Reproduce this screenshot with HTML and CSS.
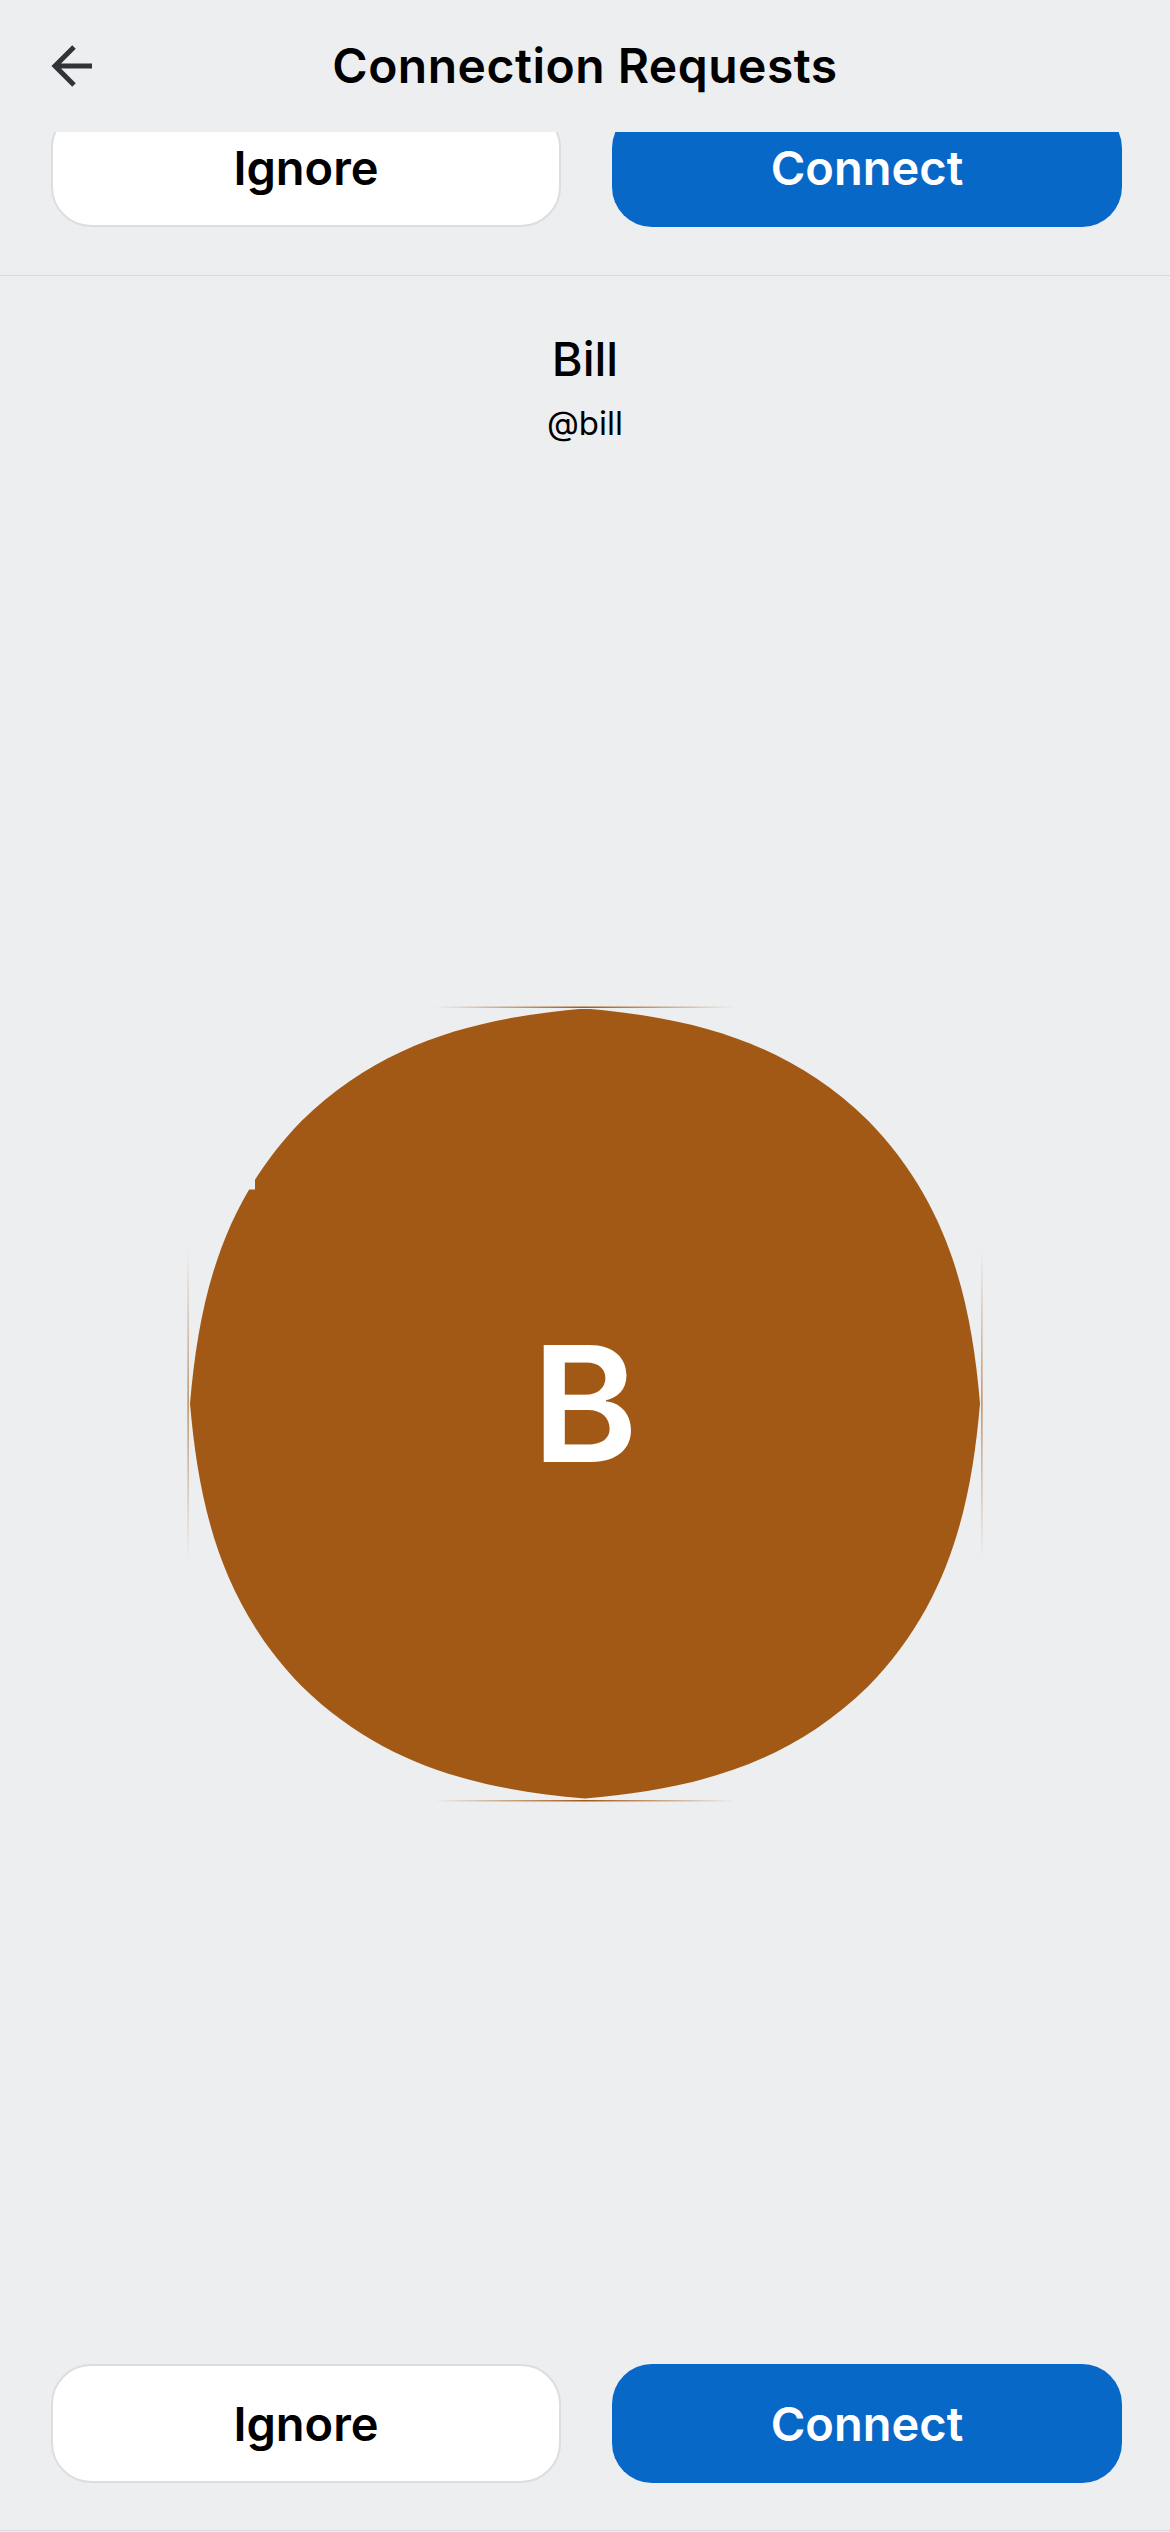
FILE: index.html
```html
<!DOCTYPE html>
<html lang="en">
<head>
    <meta charset="UTF-8">
    <title>Connection Requests</title>
    <link rel="stylesheet" href="styles.css">
</head>
<body>
<div class="page">
    <div class="topbar">
        <a class="back" href="#">
            <svg width="42" height="44" viewBox="0 0 42 44">
                <path d="M23 3 L4 22 L23 41 M4 22 L41 22" fill="none" stroke="#313339" stroke-width="5"/>
            </svg>
        </a>
        <h1 class="title">Connection Requests</h1>
        <span></span>
    </div>

    <div class="request prev">
        <div class="actions">
            <button class="btn ignore">Ignore</button>
            <button class="btn connect">Connect</button>
        </div>
    </div>

    <div class="request current">
        <div class="name">Bill</div>
        <div class="handle">@bill</div>
        <div class="avatar_area">
            <div class="avatar">
                <svg class="edges" width="798" height="798" viewBox="-4 -4 798 798">
                    <defs>
                        <linearGradient id="fadeH" x1="0" y1="0" x2="1" y2="0">
                            <stop offset="0" stop-color="#a25915" stop-opacity="0"/>
                            <stop offset="0.5" stop-color="#a25915" stop-opacity="1"/>
                            <stop offset="1" stop-color="#a25915" stop-opacity="0"/>
                        </linearGradient>
                        <linearGradient id="fadeV" x1="0" y1="0" x2="0" y2="1">
                            <stop offset="0" stop-color="#a25915" stop-opacity="0"/>
                            <stop offset="0.5" stop-color="#a25915" stop-opacity="0.8"/>
                            <stop offset="1" stop-color="#a25915" stop-opacity="0"/>
                        </linearGradient>
                    </defs>
                    <rect x="245" y="-2.5" width="300" height="1.5" fill="url(#fadeH)"/>
                    <rect x="245" y="791" width="300" height="1.5" fill="url(#fadeH)"/>
                    <rect x="-2.5" y="240" width="1.2" height="310" fill="url(#fadeV)"/>
                    <rect x="791.3" y="240" width="1.2" height="310" fill="url(#fadeV)"/>
                </svg>
                <div class="blob">B</div>
            </div>
        </div>
        <div class="actions">
            <button class="btn ignore">Ignore</button>
            <button class="btn connect">Connect</button>
        </div>
    </div>
</div>
</body>
</html>
```

FILE: styles.css
```css
body{
    margin: 0;
    background-color: #edeef0;
    font-family: Inter, "Noto Sans", sans-serif;
    color: #000;
}
.page{
    height: 2532px;
    display: flex;
    flex-direction: column;
    overflow: hidden;
}
.topbar{
    height: 132px;
    flex-shrink: 0;
    display: grid;
    grid-template-columns: 1fr auto 1fr;
    align-items: center;
    position: relative;
    z-index: 2;
    background-color: #edeef0;
}
.back{
    display: flex;
    padding-left: 51px;
}
.title{
    margin: 0;
    font-size: 48px;
    font-weight: 600;
    line-height: 58px;
    letter-spacing: 0.5px;
}
.request{
    border-bottom: 1px solid #d8d9dc;
}
.prev{
    height: 143px;
    flex-shrink: 0;
    overflow: hidden;
}
.prev .actions{
    margin-top: -24px;
}
.current{
    flex: 1;
    display: flex;
    flex-direction: column;
    align-items: center;
    padding: 55px 0 47px;
    margin-bottom: 1px;
}
.name{
    font-size: 47px;
    font-weight: 500;
    line-height: 56px;
}
.handle{
    margin-top: 16px;
    font-size: 33px;
    line-height: 40px;
}
.avatar_area{
    flex: 1;
    display: flex;
    align-items: center;
    justify-content: center;
    width: 100%;
}
.avatar{
    display: grid;
    place-items: center;
}
.avatar .edges,
.avatar .blob{
    grid-area: 1 / 1;
}
.avatar .edges{
    display: block;
}
.blob{
    width: 790px;
    height: 790px;
    display: flex;
    align-items: center;
    justify-content: center;
    background-color: #a25915;
    clip-path: path('M395 0 C290 9 194 32 112 112 C32 194 9 290 0 395 C9 500 32 596 112 678 C194 758 290 781 395 790 C500 781 596 758 678 678 C758 596 781 500 790 395 C781 290 758 194 678 112 C596 32 500 9 395 0 Z');
    color: #fff;
    font-size: 161px;
    font-weight: 600;
    line-height: 1;
}
.actions{
    width: 100%;
    box-sizing: border-box;
    display: grid;
    grid-template-columns: 1fr 1fr;
    gap: 51px;
    padding: 0 48px 0 51px;
}
.btn{
    height: 119px;
    border-radius: 40px;
    font-family: Inter, "Noto Sans", sans-serif;
    font-size: 47px;
    font-weight: 600;
    padding: 0;
    cursor: pointer;
}
.ignore{
    background-color: #fff;
    color: #000;
    border: 2px solid #dcdde0;
}
.connect{
    background-color: #0768c8;
    color: #fff;
    border: none;
}
```
